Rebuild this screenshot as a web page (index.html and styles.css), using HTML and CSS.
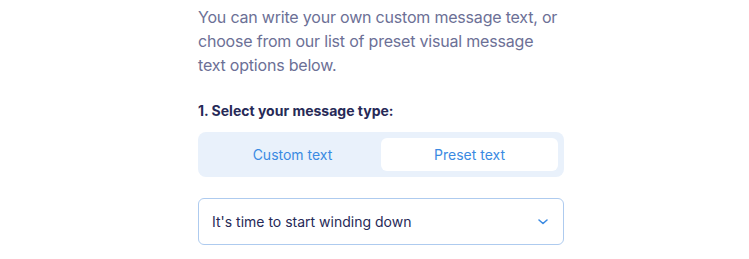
FILE: index.html
```html
<!DOCTYPE html>
<html lang="en">
<head>
  <meta charset="UTF-8">
  <meta name="viewport" content="width=device-width, initial-scale=1.0">
  <title>Message type</title>
  <link rel="stylesheet" href="styles.css">
</head>
<body>
  <div class="panel">
    <p class="intro">You can write your own custom message text, or choose from our list of preset visual message text options below.</p>

    <h3 class="step-title">1. Select your message type:</h3>

    <div class="toggle">
      <button class="toggle-btn">Custom text</button>
      <button class="toggle-btn active">Preset text</button>
    </div>

    <div class="select">
      <span class="select-value">It's time to start winding down</span>
      <svg class="chevron" width="12" height="8" viewBox="0 0 12 8">
        <path d="M2 2 L6 5.5 L10 2" fill="none" stroke="#3b8ae2" stroke-width="1.6" stroke-linecap="round" stroke-linejoin="round"/>
      </svg>
    </div>
  </div>
</body>
</html>
```

FILE: styles.css
```css
body {
    font-family: Inter, "Noto Sans", sans-serif;
    margin: 0;
    background: #fff;
}

.panel {
    width: 366px;
    margin-left: 198px;
    padding-top: 5px;
}

.intro {
    margin: 0;
    font-size: 16px;
    line-height: 24px;
    letter-spacing: -0.2px;
    color: #6c7096;
}

.step-title {
    margin: 24px 0 11px;
    font-size: 14px;
    line-height: 20px;
    font-weight: 700;
    color: #272a57;
}

.toggle {
    display: flex;
    padding: 6px;
    background: #e9f1fb;
    border-radius: 8px;
}

.toggle-btn {
    flex: 1;
    height: 33px;
    border: none;
    border-radius: 6px;
    background: transparent;
    font-family: inherit;
    font-size: 14px;
    color: #3b8ae2;
    cursor: pointer;
}

.toggle-btn.active {
    background: #fff;
}

.select {
    display: flex;
    align-items: center;
    justify-content: space-between;
    height: 45px;
    margin-top: 21px;
    padding: 0 14px 0 13px;
    border: 1px solid #aecbef;
    border-radius: 6px;
}

.select-value {
    font-size: 14px;
    color: #272a57;
}

.chevron {
    display: block;
}
```
